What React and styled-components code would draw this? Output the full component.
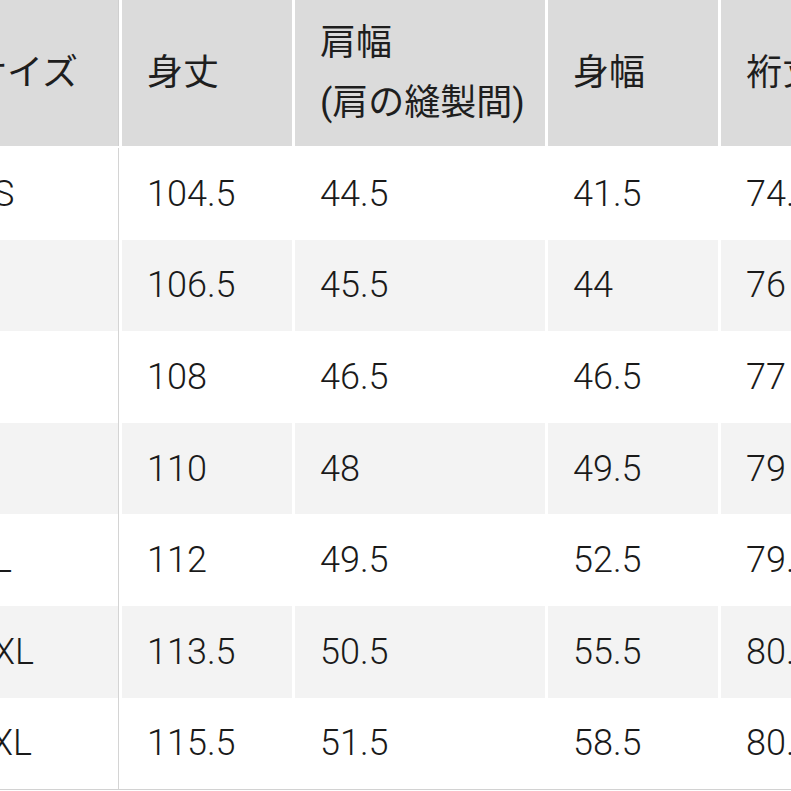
import styled, { createGlobalStyle } from "styled-components";

const GlobalStyle = createGlobalStyle`
    html, body {
        margin: 0;
        padding: 0;
        background: #ffffff;
    }
    body {
        font-family: Roboto, "Noto Sans CJK JP", sans-serif;
        color: #1e1e1e;
    }
`;

const Viewport = styled.div`
    width: 791px;
    height: 791px;
    overflow: hidden;
    background: #fff;
`;

const Table = styled.div`
    display: grid;
    grid-template-columns: 173px 170px 250px 170px 200px;
    grid-template-rows: 148px repeat(7, 91.6px);
    column-gap: 3px;
    row-gap: 0;
    margin-left: -54px;
    width: max-content;
    border-bottom: 1px solid #d2d2d2;
`;

const HeadCell = styled.div`
    background: #dbdbdb;
    display: flex;
    align-items: center;
    padding-left: 25px;
    margin-bottom: 2px;
    font-size: 36px;
    line-height: 60px;
    white-space: nowrap;
    border-right: ${(p) => (p.first ? "1px solid #cfcfcf" : "none")};
`;

const Cell = styled.div`
    background: ${(p) => (p.shade ? "#f3f3f3" : "#ffffff")};
    display: flex;
    align-items: center;
    padding-left: 25px;
    font-size: 36px;
    font-weight: 300;
    color: #1a1a1a;
    white-space: nowrap;
    border-right: ${(p) => (p.first ? "1px solid #d4d4d4" : "none")};
`;

const headers = ["サイズ", "身丈", "肩幅\n(肩の縫製間)", "身幅", "裄丈"];

const rows = [
    ["XS", "104.5", "44.5", "41.5", "74.5"],
    ["S", "106.5", "45.5", "44", "76"],
    ["M", "108", "46.5", "46.5", "77"],
    ["L", "110", "48", "49.5", "79"],
    ["XL", "112", "49.5", "52.5", "79.5"],
    ["XXL", "113.5", "50.5", "55.5", "80.5"],
    ["3XL", "115.5", "51.5", "58.5", "80.5"]
];

export default function App() {
    return (
        <Viewport>
            <GlobalStyle />
            <Table>
                {headers.map((h, i) => (
                    <HeadCell key={h} first={i === 0}>
                        <div>
                            {h.split("\n").map((line) => (
                                <div key={line}>{line}</div>
                            ))}
                        </div>
                    </HeadCell>
                ))}
                {rows.map((row, r) =>
                    row.map((val, c) => (
                        <Cell key={r + "-" + c} shade={r % 2 === 1} first={c === 0}>
                            {val}
                        </Cell>
                    ))
                )}
            </Table>
        </Viewport>
    );
}
